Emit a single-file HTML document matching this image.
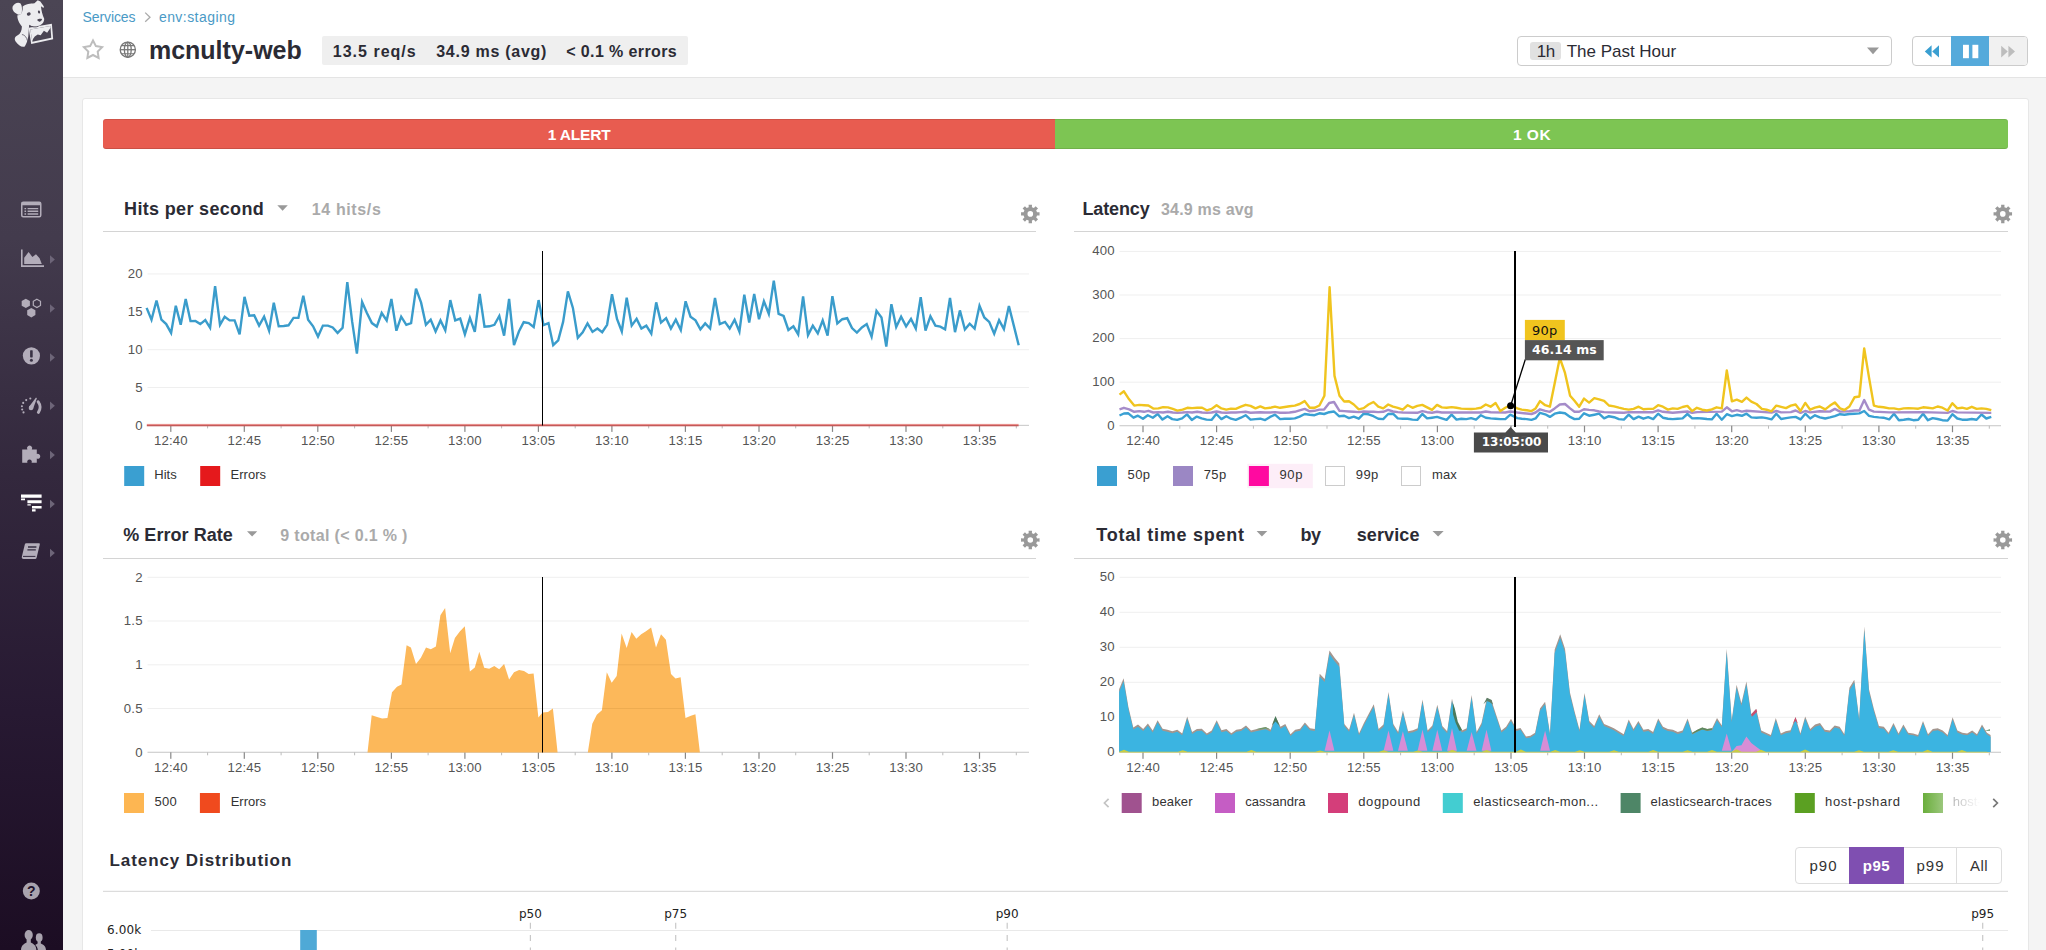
<!DOCTYPE html>
<html lang="en"><head><meta charset="utf-8"><title>mcnulty-web | Services</title>
<style>
html,body{margin:0;padding:0}
body{width:2046px;height:950px;overflow:hidden;position:relative;background:#f4f4f4;font-family:"Liberation Sans",sans-serif}
.t{position:absolute;white-space:nowrap;display:block}
.b{position:absolute;box-sizing:border-box}
#side{left:0;top:0;width:63px;height:950px;background:linear-gradient(180deg,#4b4554 0%,#433b4d 25%,#33283d 50%,#271932 75%,#1c0d23 100%)}
#head{left:63px;top:0;width:1983px;height:78px;background:#fff;border-bottom:1px solid #e4e4e4}
#panel{left:82px;top:98px;width:1947px;height:870px;background:#fff;border:1px solid #e7e7e7;border-radius:3px}
#stats{left:322px;top:36px;width:366px;height:28.5px;background:#efefef;border-radius:2px}
#sel{left:1517px;top:36px;width:375px;height:30px;background:#fff;border:1px solid #ccc;border-radius:4px}
#chip{left:1530px;top:42px;width:31px;height:17.5px;background:#e1e1e1;border-radius:3px}
#ctl{left:1912px;top:36px;width:116px;height:30px;background:#fff;border:1px solid #ccc;border-radius:4px}
#ctl2{left:1950.5px;top:36px;width:38.7px;height:30px;background:#55aadb}
#ctl3{left:1989.2px;top:37px;width:37.8px;height:28px;background:#f1f1f1;border-radius:0 3px 3px 0}
#red{left:103px;top:119px;width:952px;height:29.7px;background:#e85c50;border-radius:3px 0 0 3px;box-shadow:inset 0 1px 0 rgba(0,0,0,.10),inset 0 -1px 0 rgba(0,0,0,.13)}
#green{left:1055px;top:119px;width:953px;height:29.7px;background:#7dc553;border-radius:0 3px 3px 0;box-shadow:inset 0 1px 0 rgba(0,0,0,.08),inset 0 -1px 0 rgba(0,0,0,.10)}
#pb{left:1795px;top:847px;width:207px;height:37px;background:#fff;border:1px solid #ddd;border-radius:4px}
#pb2{left:1849px;top:847px;width:55px;height:37px;background:#7f4fb1}
.dv{position:absolute;top:848px;width:1px;height:35px;background:#ddd}
#charts{position:absolute;left:0;top:0}
</style></head><body>
<div class="b" id="side"></div><div class="b" id="head"></div><div class="b" id="panel"></div>
<div class="b" id="stats"></div><div class="b" id="sel"></div><div class="b" id="chip"></div>
<div class="b" id="ctl"></div><div class="b" id="ctl2"></div><div class="b" id="ctl3"></div>
<div class="b" id="red"></div><div class="b" id="green"></div>
<div class="b" id="pb"></div><div class="b" id="pb2"></div><div class="dv" style="left:1956px"></div>
<svg id="charts" width="2046" height="950" viewBox="0 0 2046 950">
<polygon points="277.3,205.3 287.8,205.3 282.6,210.8" fill="#999"/>
<polygon points="247.0,531.3 257.2,531.3 252.1,536.6" fill="#999"/>
<polygon points="1256.6,531.0 1267.3,531.0 1261.9,536.4" fill="#999"/>
<polygon points="1432.5,531.0 1443.7,531.0 1438.1,536.4" fill="#999"/>
<polygon points="1867.0,47.6 1879.0,47.6 1873.0,54.2" fill="#999"/>
<path d="M1028.61 204.65 L1031.99 204.65 L1031.91 207.19 L1033.91 208.02 L1035.64 206.17 L1038.03 208.56 L1036.18 210.29 L1037.01 212.29 L1039.55 212.21 L1039.55 215.59 L1037.01 215.51 L1036.18 217.51 L1038.03 219.24 L1035.64 221.63 L1033.91 219.78 L1031.91 220.61 L1031.99 223.15 L1028.61 223.15 L1028.69 220.61 L1026.69 219.78 L1024.96 221.63 L1022.57 219.24 L1024.42 217.51 L1023.59 215.51 L1021.05 215.59 L1021.05 212.21 L1023.59 212.29 L1024.42 210.29 L1022.57 208.56 L1024.96 206.17 L1026.69 208.02 L1028.69 207.19Z M1027.50 213.90 a2.8 2.8 0 1 0 5.6 0 a2.8 2.8 0 1 0 -5.6 0Z" fill="#999" fill-rule="evenodd"/>
<path d="M2001.11 204.65 L2004.49 204.65 L2004.41 207.19 L2006.41 208.02 L2008.14 206.17 L2010.53 208.56 L2008.68 210.29 L2009.51 212.29 L2012.05 212.21 L2012.05 215.59 L2009.51 215.51 L2008.68 217.51 L2010.53 219.24 L2008.14 221.63 L2006.41 219.78 L2004.41 220.61 L2004.49 223.15 L2001.11 223.15 L2001.19 220.61 L1999.19 219.78 L1997.46 221.63 L1995.07 219.24 L1996.92 217.51 L1996.09 215.51 L1993.55 215.59 L1993.55 212.21 L1996.09 212.29 L1996.92 210.29 L1995.07 208.56 L1997.46 206.17 L1999.19 208.02 L2001.19 207.19Z M2000.00 213.90 a2.8 2.8 0 1 0 5.6 0 a2.8 2.8 0 1 0 -5.6 0Z" fill="#999" fill-rule="evenodd"/>
<path d="M1028.61 530.75 L1031.99 530.75 L1031.91 533.29 L1033.91 534.12 L1035.64 532.27 L1038.03 534.66 L1036.18 536.39 L1037.01 538.39 L1039.55 538.31 L1039.55 541.69 L1037.01 541.61 L1036.18 543.61 L1038.03 545.34 L1035.64 547.73 L1033.91 545.88 L1031.91 546.71 L1031.99 549.25 L1028.61 549.25 L1028.69 546.71 L1026.69 545.88 L1024.96 547.73 L1022.57 545.34 L1024.42 543.61 L1023.59 541.61 L1021.05 541.69 L1021.05 538.31 L1023.59 538.39 L1024.42 536.39 L1022.57 534.66 L1024.96 532.27 L1026.69 534.12 L1028.69 533.29Z M1027.50 540.00 a2.8 2.8 0 1 0 5.6 0 a2.8 2.8 0 1 0 -5.6 0Z" fill="#999" fill-rule="evenodd"/>
<path d="M2001.11 530.75 L2004.49 530.75 L2004.41 533.29 L2006.41 534.12 L2008.14 532.27 L2010.53 534.66 L2008.68 536.39 L2009.51 538.39 L2012.05 538.31 L2012.05 541.69 L2009.51 541.61 L2008.68 543.61 L2010.53 545.34 L2008.14 547.73 L2006.41 545.88 L2004.41 546.71 L2004.49 549.25 L2001.11 549.25 L2001.19 546.71 L1999.19 545.88 L1997.46 547.73 L1995.07 545.34 L1996.92 543.61 L1996.09 541.61 L1993.55 541.69 L1993.55 538.31 L1996.09 538.39 L1996.92 536.39 L1995.07 534.66 L1997.46 532.27 L1999.19 534.12 L2001.19 533.29Z M2000.00 540.00 a2.8 2.8 0 1 0 5.6 0 a2.8 2.8 0 1 0 -5.6 0Z" fill="#999" fill-rule="evenodd"/>
<rect x="103.0" y="231.00" width="933.0" height="1" fill="#d4d4d4"/>
<rect x="1074.0" y="231.00" width="934.0" height="1" fill="#d4d4d4"/>
<rect x="103.0" y="558.00" width="933.0" height="1" fill="#d4d4d4"/>
<rect x="1074.0" y="558.00" width="934.0" height="1" fill="#d4d4d4"/>
<rect x="103.0" y="890.80" width="1905.0" height="1" fill="#d4d4d4"/>
<rect x="147.5" y="273.45" width="881.5" height="1" fill="#efefef"/>
<rect x="147.5" y="311.30" width="881.5" height="1" fill="#efefef"/>
<rect x="147.5" y="349.20" width="881.5" height="1" fill="#efefef"/>
<rect x="147.5" y="387.05" width="881.5" height="1" fill="#efefef"/>
<rect x="147.5" y="424.80" width="881.5" height="1.2" fill="#cfcfcf"/>
<rect x="170.2" y="425.4" width="1.2" height="6.5" fill="#888"/>
<rect x="243.7" y="425.4" width="1.2" height="6.5" fill="#888"/>
<rect x="317.2" y="425.4" width="1.2" height="6.5" fill="#888"/>
<rect x="390.8" y="425.4" width="1.2" height="6.5" fill="#888"/>
<rect x="464.3" y="425.4" width="1.2" height="6.5" fill="#888"/>
<rect x="537.8" y="425.4" width="1.2" height="6.5" fill="#888"/>
<rect x="611.3" y="425.4" width="1.2" height="6.5" fill="#888"/>
<rect x="684.8" y="425.4" width="1.2" height="6.5" fill="#888"/>
<rect x="758.4" y="425.4" width="1.2" height="6.5" fill="#888"/>
<rect x="831.9" y="425.4" width="1.2" height="6.5" fill="#888"/>
<rect x="905.4" y="425.4" width="1.2" height="6.5" fill="#888"/>
<rect x="978.9" y="425.4" width="1.2" height="6.5" fill="#888"/>
<rect x="207.1" y="425.4" width="1" height="3" fill="#bbb"/>
<rect x="280.6" y="425.4" width="1" height="3" fill="#bbb"/>
<rect x="354.1" y="425.4" width="1" height="3" fill="#bbb"/>
<rect x="427.6" y="425.4" width="1" height="3" fill="#bbb"/>
<rect x="501.1" y="425.4" width="1" height="3" fill="#bbb"/>
<rect x="574.7" y="425.4" width="1" height="3" fill="#bbb"/>
<rect x="648.2" y="425.4" width="1" height="3" fill="#bbb"/>
<rect x="721.7" y="425.4" width="1" height="3" fill="#bbb"/>
<rect x="795.2" y="425.4" width="1" height="3" fill="#bbb"/>
<rect x="868.7" y="425.4" width="1" height="3" fill="#bbb"/>
<rect x="942.3" y="425.4" width="1" height="3" fill="#bbb"/>
<rect x="1015.8" y="425.4" width="1" height="3" fill="#bbb"/>
<polyline points="146.6,307.9 151.5,319.7 156.5,300.5 161.4,319.7 166.2,324.1 171.1,332.9 175.8,305.7 180.7,324.8 185.7,299.0 190.5,321.1 195.4,320.9 200.3,324.1 205.3,320.1 210.1,327.8 215.1,286.2 220.0,324.8 224.7,316.7 229.6,320.4 234.6,320.4 239.6,334.4 244.5,296.8 249.3,315.7 254.2,315.3 259.1,325.6 264.1,316.7 269.1,330.7 273.8,302.7 278.7,326.3 283.7,326.0 288.5,325.3 293.5,317.9 298.4,317.9 303.3,295.8 308.1,319.7 313.1,326.3 318.0,336.6 322.9,325.6 327.9,325.6 332.7,327.5 337.6,332.9 342.6,327.8 347.3,282.1 352.2,321.9 356.9,353.6 362.1,302.0 366.9,313.0 371.9,323.1 376.8,326.6 381.7,313.0 386.7,320.4 391.4,299.0 396.4,330.7 401.2,316.7 406.3,324.8 411.1,323.1 416.0,288.7 421.1,302.7 425.9,324.8 430.7,319.7 435.6,331.5 440.5,320.4 445.3,330.4 450.3,300.1 455.2,320.4 460.2,318.6 464.9,334.4 469.9,317.9 474.8,331.9 479.7,293.9 484.5,326.7 489.5,326.3 494.4,324.8 499.3,316.0 504.1,335.6 509.1,299.0 514.0,345.2 518.9,331.5 523.7,322.2 528.7,323.1 533.7,327.0 538.6,300.1 543.5,325.1 548.5,323.1 553.2,345.2 558.2,340.3 563.1,321.9 567.9,291.4 572.9,307.9 577.8,337.8 582.7,332.2 587.5,323.4 592.5,331.9 597.4,328.5 602.2,332.2 607.1,324.8 612.0,294.3 617.0,318.9 621.8,331.5 626.7,297.6 631.7,325.6 636.6,318.9 641.4,328.5 646.3,325.6 651.3,333.7 656.2,302.4 661.0,322.6 666.1,318.2 670.9,328.5 675.8,319.7 680.8,330.0 685.6,301.3 690.5,316.7 695.5,320.4 700.4,329.3 705.2,323.4 710.1,328.5 715.0,298.0 719.8,324.1 725.0,321.9 729.7,328.5 734.6,319.7 739.4,331.5 744.3,294.6 749.2,322.6 754.2,293.9 759.0,319.2 763.9,301.3 768.8,313.8 773.8,280.6 778.6,313.8 783.6,316.0 788.4,330.0 793.4,326.3 798.2,334.4 803.1,296.4 808.0,335.1 812.8,325.6 817.8,333.4 822.7,320.4 827.6,335.6 832.4,296.1 837.3,323.4 842.3,319.2 847.2,318.2 852.0,328.1 856.9,332.6 861.9,327.5 866.7,324.1 871.6,336.6 876.5,310.8 881.5,317.5 886.3,346.5 891.4,304.2 896.2,327.0 901.1,316.7 906.1,326.3 911.0,318.9 915.8,328.5 920.7,297.1 925.5,330.7 930.4,316.3 935.4,325.6 940.3,326.6 945.1,329.3 950.0,297.9 955.0,332.2 959.9,310.4 964.9,329.5 969.7,323.7 974.6,328.5 979.5,305.7 984.3,317.5 989.2,321.9 994.2,333.7 999.1,320.1 1003.9,329.0 1008.9,306.0 1013.8,325.6 1018.7,345.2" fill="none" stroke="#3a9ccb" stroke-width="2.4" stroke-linejoin="miter"/>
<rect x="146.8" y="423.9" width="871.8" height="1.1" fill="#e98f8c"/><rect x="146.8" y="425" width="871.8" height="1.3" fill="#c45a59"/>
<rect x="542" y="251" width="1" height="174.5" fill="#000"/>
<rect x="1119.5" y="250.90" width="881.5" height="1" fill="#efefef"/>
<rect x="1119.5" y="294.50" width="881.5" height="1" fill="#efefef"/>
<rect x="1119.5" y="338.10" width="881.5" height="1" fill="#efefef"/>
<rect x="1119.5" y="381.70" width="881.5" height="1" fill="#efefef"/>
<rect x="1119.5" y="425.10" width="881.5" height="1.2" fill="#cfcfcf"/>
<rect x="1142.4" y="425.7" width="1.2" height="6.5" fill="#888"/>
<rect x="1216.0" y="425.7" width="1.2" height="6.5" fill="#888"/>
<rect x="1289.6" y="425.7" width="1.2" height="6.5" fill="#888"/>
<rect x="1363.2" y="425.7" width="1.2" height="6.5" fill="#888"/>
<rect x="1436.8" y="425.7" width="1.2" height="6.5" fill="#888"/>
<rect x="1510.4" y="425.7" width="1.2" height="6.5" fill="#888"/>
<rect x="1583.9" y="425.7" width="1.2" height="6.5" fill="#888"/>
<rect x="1657.5" y="425.7" width="1.2" height="6.5" fill="#888"/>
<rect x="1731.1" y="425.7" width="1.2" height="6.5" fill="#888"/>
<rect x="1804.7" y="425.7" width="1.2" height="6.5" fill="#888"/>
<rect x="1878.3" y="425.7" width="1.2" height="6.5" fill="#888"/>
<rect x="1951.9" y="425.7" width="1.2" height="6.5" fill="#888"/>
<rect x="1179.3" y="425.7" width="1" height="3" fill="#bbb"/>
<rect x="1252.9" y="425.7" width="1" height="3" fill="#bbb"/>
<rect x="1326.5" y="425.7" width="1" height="3" fill="#bbb"/>
<rect x="1400.1" y="425.7" width="1" height="3" fill="#bbb"/>
<rect x="1473.7" y="425.7" width="1" height="3" fill="#bbb"/>
<rect x="1547.2" y="425.7" width="1" height="3" fill="#bbb"/>
<rect x="1620.8" y="425.7" width="1" height="3" fill="#bbb"/>
<rect x="1694.4" y="425.7" width="1" height="3" fill="#bbb"/>
<rect x="1768.0" y="425.7" width="1" height="3" fill="#bbb"/>
<rect x="1841.6" y="425.7" width="1" height="3" fill="#bbb"/>
<rect x="1915.2" y="425.7" width="1" height="3" fill="#bbb"/>
<rect x="1988.8" y="425.7" width="1" height="3" fill="#bbb"/>
<polyline points="1119.5,415.5 1123.9,413.5 1128.3,413.3 1133.5,417.7 1137.9,415.7 1143.0,418.8 1147.8,415.2 1152.8,417.7 1157.7,414.0 1162.5,419.6 1167.5,416.2 1172.3,419.1 1177.2,419.9 1182.1,418.4 1187.0,414.4 1191.8,419.9 1196.8,416.6 1201.6,418.4 1206.5,419.6 1211.5,419.9 1216.3,414.0 1221.4,419.1 1226.3,416.2 1231.0,418.7 1235.8,419.9 1240.9,417.7 1245.6,415.2 1250.5,419.6 1255.5,419.1 1260.3,418.7 1265.1,420.1 1270.1,416.9 1275.0,414.7 1280.1,419.1 1284.8,418.7 1289.6,418.7 1294.8,418.4 1299.6,416.6 1304.7,414.0 1309.7,414.7 1314.5,415.2 1319.4,413.3 1324.1,414.0 1329.2,412.2 1334.0,411.5 1339.0,416.2 1344.2,415.7 1349.0,418.1 1353.8,416.6 1358.8,418.7 1363.7,413.7 1368.5,414.3 1373.5,416.2 1378.3,418.7 1383.2,419.1 1388.2,414.0 1393.0,413.7 1397.8,418.4 1402.8,418.7 1407.6,418.7 1412.5,419.6 1417.3,419.9 1422.3,414.0 1427.1,418.4 1432.0,417.7 1437.0,416.9 1441.8,418.4 1446.6,419.9 1451.6,414.7 1456.5,419.6 1461.3,418.7 1466.3,419.1 1471.1,418.1 1476.0,419.6 1480.9,415.2 1485.8,417.7 1490.6,418.4 1495.6,418.7 1500.4,419.1 1505.3,419.1 1510.3,414.7 1517.3,418.1 1521.7,418.7 1526.8,419.1 1531.5,419.9 1535.6,418.4 1540.0,412.8 1545.2,414.3 1549.9,416.9 1554.7,413.7 1559.8,412.5 1565.0,413.3 1570.1,416.9 1574.5,419.1 1579.2,418.7 1584.0,413.3 1589.1,415.7 1594.3,414.7 1599.1,413.7 1604.1,418.4 1608.9,416.2 1614.1,417.2 1618.9,419.1 1623.9,419.6 1628.7,414.7 1633.6,419.1 1638.6,416.6 1643.4,418.7 1648.2,417.2 1653.2,419.1 1658.1,413.7 1662.9,417.7 1667.9,418.7 1672.7,419.1 1677.6,418.7 1682.6,418.4 1687.4,414.0 1692.2,418.4 1697.3,418.1 1702.1,418.5 1706.9,419.0 1711.8,419.4 1716.6,413.7 1721.8,419.7 1726.8,414.2 1731.9,416.1 1736.8,414.8 1741.9,415.8 1746.5,413.7 1751.3,417.4 1756.5,417.7 1761.8,417.4 1766.6,418.1 1771.5,419.4 1776.3,413.7 1781.1,419.0 1786.0,418.1 1790.8,417.4 1795.6,416.9 1800.5,419.4 1805.3,413.7 1810.2,418.5 1815.0,415.3 1819.8,417.4 1825.2,418.5 1830.0,417.4 1834.8,416.1 1840.0,414.2 1844.5,414.8 1849.4,414.0 1854.5,413.7 1859.4,413.4 1864.2,411.0 1869.0,415.8 1873.9,416.9 1878.7,417.4 1883.5,417.7 1889.2,419.4 1894.0,413.7 1898.9,420.2 1903.7,419.7 1908.5,419.0 1913.4,420.2 1918.2,419.7 1923.1,413.7 1927.9,420.2 1932.7,418.1 1937.6,419.0 1942.4,420.2 1947.6,420.6 1952.4,414.2 1957.3,418.5 1962.1,419.7 1966.9,419.7 1971.8,419.0 1976.6,419.7 1981.5,414.5 1986.3,418.5 1991.3,416.9" fill="none" stroke="#3aa0d3" stroke-width="2.4" stroke-linejoin="round"/>
<polyline points="1119.5,409.3 1123.9,407.8 1129.1,409.3 1134.2,411.8 1139.3,411.1 1144.0,411.8 1148.4,410.8 1153.3,412.5 1158.4,412.1 1163.1,412.5 1167.9,411.8 1172.8,412.5 1177.4,412.8 1182.6,412.5 1187.4,412.1 1192.1,412.5 1197.2,411.8 1202.1,412.5 1206.8,412.8 1211.6,412.5 1216.6,411.5 1221.4,412.5 1226.3,412.8 1231.0,412.5 1235.8,412.5 1240.9,412.1 1245.6,411.8 1250.5,412.8 1255.5,412.5 1260.3,412.2 1265.1,412.5 1270.1,412.5 1275.0,412.1 1280.1,412.8 1284.8,412.8 1289.6,412.5 1294.8,411.8 1299.6,410.3 1304.7,408.9 1309.7,411.3 1314.5,410.8 1319.4,409.6 1324.1,409.6 1329.2,403.0 1334.0,402.0 1339.5,410.8 1344.2,411.1 1349.0,411.5 1353.8,411.8 1358.8,412.1 1363.7,411.5 1368.5,411.8 1373.5,411.8 1378.3,412.1 1383.2,411.8 1388.2,409.9 1393.0,411.5 1397.8,412.1 1402.8,412.5 1417.3,412.8 1422.3,411.1 1427.1,412.2 1432.0,412.8 1437.0,411.8 1441.8,412.5 1458.7,412.5 1480.9,412.5 1485.8,411.5 1490.6,412.2 1505.3,412.5 1510.3,411.5 1517.3,412.5 1531.5,414.0 1535.6,412.5 1540.0,409.3 1545.2,410.8 1549.9,411.8 1554.7,408.4 1559.8,404.5 1565.0,404.0 1570.1,408.4 1574.5,411.8 1579.2,411.8 1584.0,409.3 1589.1,409.9 1594.3,410.3 1599.1,411.5 1604.1,412.1 1614.1,412.5 1623.9,412.8 1628.7,412.1 1653.2,412.2 1658.1,410.3 1662.9,411.8 1672.7,412.8 1687.4,411.5 1692.2,412.8 1697.3,412.1 1721.8,411.6 1726.8,407.3 1731.9,411.3 1736.8,410.2 1741.9,411.6 1746.5,410.8 1771.5,412.6 1776.3,411.0 1781.1,412.4 1790.8,412.1 1795.6,410.5 1800.5,412.9 1805.3,411.0 1810.2,412.4 1819.8,411.3 1830.0,411.6 1834.8,408.9 1840.0,411.6 1849.4,411.3 1854.5,410.5 1859.4,410.5 1864.2,400.0 1869.0,409.7 1873.9,411.6 1889.2,412.4 1923.1,412.1 1947.6,412.9 1952.4,411.0 1957.3,412.4 1991.3,412.9" fill="none" stroke="#a58cc9" stroke-width="2.4" stroke-linejoin="round"/>
<polyline points="1119.5,394.6 1123.9,391.3 1129.1,399.3 1134.2,405.6 1139.3,404.9 1144.0,405.2 1148.4,405.5 1153.3,408.6 1158.4,408.4 1163.1,407.1 1167.9,407.4 1172.8,408.9 1177.4,410.6 1182.6,409.6 1187.4,407.8 1192.1,408.1 1197.2,407.8 1202.1,407.8 1206.8,410.3 1211.6,408.9 1216.6,405.2 1221.4,408.4 1226.3,409.6 1231.0,408.6 1235.8,408.9 1240.9,406.7 1245.6,404.8 1250.5,405.9 1255.5,408.4 1260.3,406.4 1265.1,408.4 1270.1,407.8 1275.0,406.7 1280.1,407.8 1284.8,407.0 1289.6,406.2 1294.8,405.6 1299.6,404.0 1304.7,401.1 1309.7,407.8 1314.5,407.8 1319.4,405.5 1324.4,395.7 1329.6,287.2 1334.5,375.9 1339.5,395.7 1344.2,401.5 1349.0,401.2 1353.8,404.5 1358.8,409.3 1363.7,408.1 1368.5,404.5 1373.5,402.0 1378.3,406.7 1383.2,408.4 1388.2,404.5 1393.0,406.7 1397.8,407.8 1402.8,409.6 1407.7,405.2 1412.5,407.8 1417.3,405.9 1422.3,404.9 1427.1,407.4 1432.0,409.9 1437.0,404.9 1441.8,407.4 1446.6,407.7 1451.6,407.1 1456.5,407.8 1461.3,408.6 1466.3,408.9 1471.1,409.0 1476.0,408.6 1480.9,407.8 1485.8,404.5 1490.6,406.7 1495.6,403.0 1500.4,411.1 1505.3,407.8 1510.3,405.2 1517.3,408.4 1521.7,409.6 1526.8,410.3 1531.5,411.1 1535.6,408.4 1540.0,401.1 1545.2,405.2 1549.9,406.7 1554.7,383.2 1559.8,358.0 1565.0,372.9 1570.1,395.7 1574.5,400.8 1579.2,406.7 1584.0,398.6 1589.1,402.6 1594.3,398.2 1599.1,399.3 1604.1,400.8 1608.9,405.5 1614.1,406.4 1618.9,407.7 1623.9,408.9 1628.7,409.6 1633.6,408.9 1638.6,406.7 1643.4,409.3 1648.2,408.9 1653.2,408.9 1658.1,405.2 1662.9,406.7 1667.9,409.6 1672.7,408.4 1677.6,408.9 1682.6,407.0 1687.4,405.9 1692.2,411.1 1696.9,407.8 1702.1,409.7 1706.9,410.5 1711.8,409.4 1716.6,407.3 1721.8,408.4 1726.8,370.5 1731.9,401.3 1736.8,399.7 1741.9,401.9 1746.5,397.6 1751.3,401.6 1756.5,404.0 1761.8,408.9 1766.6,409.7 1771.5,411.3 1776.3,405.6 1781.1,406.8 1786.0,408.1 1790.8,405.6 1795.6,404.5 1800.5,411.0 1805.3,402.9 1810.2,409.7 1815.0,407.7 1819.8,406.5 1825.2,409.4 1830.0,405.6 1834.8,402.4 1840.0,408.4 1844.5,410.0 1849.4,406.5 1854.5,397.3 1859.4,396.5 1864.2,348.4 1869.0,377.4 1873.9,405.6 1878.7,406.8 1883.5,407.3 1889.2,408.4 1894.0,408.4 1898.9,409.4 1903.7,408.4 1908.5,408.1 1913.4,408.4 1918.2,408.7 1923.1,407.3 1927.9,407.7 1932.7,408.4 1937.6,406.5 1942.4,407.7 1947.6,410.5 1952.4,403.2 1957.3,408.4 1962.1,407.7 1966.9,408.9 1971.8,406.8 1976.6,408.9 1981.5,408.4 1986.3,408.9 1991.3,410.2" fill="none" stroke="#f0c41e" stroke-width="2.4" stroke-linejoin="round"/>
<rect x="1514" y="251" width="2" height="176" fill="#000"/>
<line x1="1510.6" y1="405.7" x2="1525.3" y2="359.5" stroke="#000" stroke-width="1.3"/>
<circle cx="1510.6" cy="405.7" r="3.5" fill="#000"/>
<rect x="1524.9" y="319.9" width="39.9" height="20.3" fill="#f0c41e"/>
<rect x="1524.9" y="340.1" width="78.8" height="20.2" fill="#555"/>
<path d="M1473.9 432.5H1505.4L1510.6 427L1515.8 432.5H1548V452.4H1473.9Z" fill="#4a4a4a"/>
<rect x="147.5" y="576.80" width="881.5" height="1" fill="#efefef"/>
<rect x="147.5" y="620.50" width="881.5" height="1" fill="#efefef"/>
<rect x="147.5" y="664.30" width="881.5" height="1" fill="#efefef"/>
<rect x="147.5" y="708.00" width="881.5" height="1" fill="#efefef"/>
<rect x="147.5" y="751.70" width="881.5" height="1.2" fill="#cfcfcf"/>
<rect x="170.2" y="752.3" width="1.2" height="6.5" fill="#888"/>
<rect x="243.7" y="752.3" width="1.2" height="6.5" fill="#888"/>
<rect x="317.2" y="752.3" width="1.2" height="6.5" fill="#888"/>
<rect x="390.8" y="752.3" width="1.2" height="6.5" fill="#888"/>
<rect x="464.3" y="752.3" width="1.2" height="6.5" fill="#888"/>
<rect x="537.8" y="752.3" width="1.2" height="6.5" fill="#888"/>
<rect x="611.3" y="752.3" width="1.2" height="6.5" fill="#888"/>
<rect x="684.8" y="752.3" width="1.2" height="6.5" fill="#888"/>
<rect x="758.4" y="752.3" width="1.2" height="6.5" fill="#888"/>
<rect x="831.9" y="752.3" width="1.2" height="6.5" fill="#888"/>
<rect x="905.4" y="752.3" width="1.2" height="6.5" fill="#888"/>
<rect x="978.9" y="752.3" width="1.2" height="6.5" fill="#888"/>
<rect x="207.1" y="752.3" width="1" height="3" fill="#bbb"/>
<rect x="280.6" y="752.3" width="1" height="3" fill="#bbb"/>
<rect x="354.1" y="752.3" width="1" height="3" fill="#bbb"/>
<rect x="427.6" y="752.3" width="1" height="3" fill="#bbb"/>
<rect x="501.1" y="752.3" width="1" height="3" fill="#bbb"/>
<rect x="574.7" y="752.3" width="1" height="3" fill="#bbb"/>
<rect x="648.2" y="752.3" width="1" height="3" fill="#bbb"/>
<rect x="721.7" y="752.3" width="1" height="3" fill="#bbb"/>
<rect x="795.2" y="752.3" width="1" height="3" fill="#bbb"/>
<rect x="868.7" y="752.3" width="1" height="3" fill="#bbb"/>
<rect x="942.3" y="752.3" width="1" height="3" fill="#bbb"/>
<rect x="1015.8" y="752.3" width="1" height="3" fill="#bbb"/>
<polygon points="367.5,752.4 371.7,715.3 377.1,717.1 382.2,718.4 387.4,718.0 392.0,692.2 397.0,686.7 401.5,684.4 406.6,645.2 410.9,647.5 416.0,664.1 420.9,657.8 426.0,647.5 430.8,649.3 435.9,646.4 440.4,615.3 445.1,608.1 450.2,653.3 454.9,637.9 459.8,631.6 464.8,626.2 469.9,671.4 474.8,667.4 479.3,651.8 484.2,667.8 489.2,668.7 494.3,666.0 499.2,669.2 504.1,664.1 509.1,679.5 514.0,672.3 519.1,669.9 524.0,671.0 528.7,674.1 533.6,673.5 538.4,717.5 542.6,712.6 548.0,712.1 552.9,708.5 557.6,752.4" fill="#fcb85a"/>
<polygon points="587.8,752.4 592.3,723.8 596.8,714.8 601.9,710.3 606.8,672.3 611.7,682.8 616.7,675.9 621.6,633.4 626.7,647.9 631.6,632.0 636.3,638.8 641.2,634.3 646.0,631.2 651.1,627.6 656.0,647.5 661.0,634.3 665.9,639.7 671.0,674.1 675.5,678.6 680.6,677.2 685.5,718.0 690.9,715.7 695.4,714.2 699.9,752.4" fill="#fcb85a"/>
<clipPath id="oc"><polygon points="367.5,752.4 371.7,715.3 377.1,717.1 382.2,718.4 387.4,718.0 392.0,692.2 397.0,686.7 401.5,684.4 406.6,645.2 410.9,647.5 416.0,664.1 420.9,657.8 426.0,647.5 430.8,649.3 435.9,646.4 440.4,615.3 445.1,608.1 450.2,653.3 454.9,637.9 459.8,631.6 464.8,626.2 469.9,671.4 474.8,667.4 479.3,651.8 484.2,667.8 489.2,668.7 494.3,666.0 499.2,669.2 504.1,664.1 509.1,679.5 514.0,672.3 519.1,669.9 524.0,671.0 528.7,674.1 533.6,673.5 538.4,717.5 542.6,712.6 548.0,712.1 552.9,708.5 557.6,752.4"/><polygon points="587.8,752.4 592.3,723.8 596.8,714.8 601.9,710.3 606.8,672.3 611.7,682.8 616.7,675.9 621.6,633.4 626.7,647.9 631.6,632.0 636.3,638.8 641.2,634.3 646.0,631.2 651.1,627.6 656.0,647.5 661.0,634.3 665.9,639.7 671.0,674.1 675.5,678.6 680.6,677.2 685.5,718.0 690.9,715.7 695.4,714.2 699.9,752.4"/></clipPath><g clip-path="url(#oc)">
<rect x="365.0" y="620.50" width="340.0" height="1" fill="rgba(120,70,0,0.10)"/>
<rect x="365.0" y="664.30" width="340.0" height="1" fill="rgba(120,70,0,0.10)"/>
<rect x="365.0" y="708.00" width="340.0" height="1" fill="rgba(120,70,0,0.10)"/>
</g>
<rect x="542" y="577" width="1" height="175.5" fill="#000"/>
<rect x="1119.5" y="576.80" width="881.5" height="1" fill="#efefef"/>
<rect x="1119.5" y="611.80" width="881.5" height="1" fill="#efefef"/>
<rect x="1119.5" y="646.80" width="881.5" height="1" fill="#efefef"/>
<rect x="1119.5" y="681.80" width="881.5" height="1" fill="#efefef"/>
<rect x="1119.5" y="716.80" width="881.5" height="1" fill="#efefef"/>
<rect x="1119.5" y="751.70" width="881.5" height="1.2" fill="#cfcfcf"/>
<rect x="1142.4" y="752.3" width="1.2" height="6.5" fill="#888"/>
<rect x="1216.0" y="752.3" width="1.2" height="6.5" fill="#888"/>
<rect x="1289.6" y="752.3" width="1.2" height="6.5" fill="#888"/>
<rect x="1363.2" y="752.3" width="1.2" height="6.5" fill="#888"/>
<rect x="1436.8" y="752.3" width="1.2" height="6.5" fill="#888"/>
<rect x="1510.4" y="752.3" width="1.2" height="6.5" fill="#888"/>
<rect x="1583.9" y="752.3" width="1.2" height="6.5" fill="#888"/>
<rect x="1657.5" y="752.3" width="1.2" height="6.5" fill="#888"/>
<rect x="1731.1" y="752.3" width="1.2" height="6.5" fill="#888"/>
<rect x="1804.7" y="752.3" width="1.2" height="6.5" fill="#888"/>
<rect x="1878.3" y="752.3" width="1.2" height="6.5" fill="#888"/>
<rect x="1951.9" y="752.3" width="1.2" height="6.5" fill="#888"/>
<rect x="1179.3" y="752.3" width="1" height="3" fill="#bbb"/>
<rect x="1252.9" y="752.3" width="1" height="3" fill="#bbb"/>
<rect x="1326.5" y="752.3" width="1" height="3" fill="#bbb"/>
<rect x="1400.1" y="752.3" width="1" height="3" fill="#bbb"/>
<rect x="1473.7" y="752.3" width="1" height="3" fill="#bbb"/>
<rect x="1547.2" y="752.3" width="1" height="3" fill="#bbb"/>
<rect x="1620.8" y="752.3" width="1" height="3" fill="#bbb"/>
<rect x="1694.4" y="752.3" width="1" height="3" fill="#bbb"/>
<rect x="1768.0" y="752.3" width="1" height="3" fill="#bbb"/>
<rect x="1841.6" y="752.3" width="1" height="3" fill="#bbb"/>
<rect x="1915.2" y="752.3" width="1" height="3" fill="#bbb"/>
<rect x="1988.8" y="752.3" width="1" height="3" fill="#bbb"/>
<polygon points="1119.1,752.0 1119.1,689.3 1123.6,678.2 1128.4,706.9 1133.3,727.6 1138.0,724.6 1143.2,729.0 1147.9,723.6 1152.7,730.5 1157.6,720.2 1162.6,728.7 1167.5,729.8 1172.3,731.2 1177.3,729.8 1182.2,733.5 1187.2,716.5 1192.1,732.0 1196.9,729.0 1201.8,728.7 1206.8,733.5 1211.7,730.5 1216.7,720.2 1221.5,730.2 1226.4,729.0 1231.3,733.2 1236.3,729.8 1241.1,729.0 1246.0,725.4 1251.0,730.5 1255.9,729.3 1260.7,728.3 1265.7,727.3 1270.6,729.8 1275.5,716.5 1280.5,726.8 1285.3,723.9 1290.5,734.2 1295.2,729.8 1300.1,728.7 1304.9,722.4 1310.0,728.3 1314.8,729.0 1319.7,673.8 1324.7,678.9 1329.5,650.5 1334.4,657.6 1339.3,663.5 1344.3,723.9 1349.1,729.8 1354.0,712.8 1359.0,733.5 1363.9,723.1 1368.9,713.6 1373.8,704.3 1378.6,729.0 1383.5,724.6 1388.5,691.9 1393.3,723.9 1398.2,732.0 1402.9,710.6 1408.1,731.2 1413.0,730.2 1417.7,728.3 1422.5,699.6 1427.6,730.5 1432.4,725.4 1437.3,704.7 1442.3,726.1 1447.2,731.2 1452.0,698.5 1457.0,723.1 1461.9,730.5 1466.7,728.3 1471.6,695.1 1476.6,732.0 1481.5,723.1 1486.9,698.1 1491.4,700.3 1496.5,715.8 1501.4,730.5 1506.1,726.8 1511.0,718.7 1516.4,729.0 1520.5,727.9 1526.0,736.4 1530.4,735.7 1535.1,732.7 1540.0,708.4 1545.1,701.8 1550.0,733.5 1554.7,649.5 1560.2,634.3 1565.0,648.7 1569.9,692.2 1574.6,711.4 1579.5,729.8 1584.5,692.9 1589.3,720.9 1594.2,726.1 1599.2,714.3 1604.1,723.9 1608.9,726.1 1613.9,728.3 1618.8,731.2 1623.7,734.2 1628.7,719.5 1633.5,729.0 1638.4,720.9 1643.4,729.8 1648.3,729.0 1653.1,732.0 1658.2,718.4 1663.0,726.8 1667.9,729.0 1672.9,729.8 1677.8,732.0 1682.6,730.5 1687.6,718.4 1692.2,732.7 1697.4,729.8 1702.2,727.6 1707.2,729.0 1712.1,728.3 1717.0,718.0 1721.8,725.4 1726.7,648.7 1731.7,720.2 1736.6,684.8 1741.4,703.3 1746.4,681.6 1751.3,714.3 1756.2,709.1 1761.2,730.5 1766.0,732.7 1770.9,734.9 1775.8,718.0 1780.8,733.5 1785.6,731.2 1790.5,730.2 1795.5,717.2 1800.4,733.5 1805.2,716.5 1810.2,729.0 1815.1,724.6 1820.0,723.1 1824.8,729.8 1829.8,730.5 1834.7,725.4 1839.6,726.8 1844.4,734.2 1849.4,687.8 1854.3,679.7 1859.2,718.7 1864.3,626.6 1869.0,689.3 1873.9,709.1 1878.9,726.1 1883.8,726.8 1888.6,732.7 1893.5,723.1 1898.5,733.5 1903.4,724.6 1908.2,732.7 1913.2,733.5 1918.1,734.9 1923.0,720.9 1928.0,734.2 1932.8,729.0 1937.7,728.3 1942.7,730.5 1947.6,734.9 1952.6,717.2 1957.4,730.5 1962.3,732.7 1967.2,733.5 1972.2,730.5 1977.0,734.2 1982.0,724.6 1986.9,732.7 1990.6,734.9 1990.6,752.0" fill="#a3968f"/>
<polygon points="1119.1,752.0 1119.1,692.0 1123.6,681.2 1128.4,709.3 1133.3,729.6 1138.0,726.7 1143.2,731.0 1147.9,725.7 1152.7,732.4 1157.6,722.3 1162.6,730.7 1167.5,731.7 1172.3,733.2 1177.3,731.7 1182.2,735.3 1187.2,718.7 1192.1,733.9 1196.9,731.0 1201.8,730.7 1206.8,735.3 1211.7,732.4 1216.7,722.3 1221.5,732.2 1226.4,731.0 1231.3,735.0 1236.3,731.7 1241.1,731.0 1246.0,727.4 1251.0,732.4 1255.9,731.3 1260.7,730.3 1265.7,729.3 1270.6,731.7 1275.5,718.7 1280.5,728.8 1285.3,725.9 1290.5,736.1 1295.2,731.7 1300.1,730.7 1304.9,724.5 1310.0,730.3 1314.8,731.0 1319.7,676.8 1324.7,681.9 1329.5,654.0 1334.4,661.0 1339.3,666.7 1344.3,725.9 1349.1,731.7 1354.0,715.1 1359.0,735.3 1363.9,725.2 1368.9,715.8 1373.8,706.7 1378.6,731.0 1383.5,726.7 1388.5,694.6 1393.3,725.9 1398.2,733.9 1402.9,712.9 1408.1,733.2 1413.0,732.2 1417.7,730.3 1422.5,702.1 1427.6,732.4 1432.4,727.4 1437.3,707.2 1442.3,728.1 1447.2,733.2 1452.0,701.1 1457.0,725.2 1461.9,732.4 1466.7,730.3 1471.6,697.8 1476.6,733.9 1481.5,725.2 1486.9,700.7 1491.4,702.8 1496.5,718.0 1501.4,732.4 1506.1,728.8 1511.0,720.9 1516.4,731.0 1520.5,729.8 1526.0,738.2 1530.4,737.5 1535.1,734.6 1540.0,710.8 1545.1,704.3 1550.0,735.3 1554.7,653.0 1560.2,638.1 1565.0,652.3 1569.9,694.9 1574.6,713.7 1579.5,731.7 1584.5,695.6 1589.3,723.1 1594.2,728.1 1599.2,716.6 1604.1,725.9 1608.9,728.1 1613.9,730.3 1618.8,733.2 1623.7,736.1 1628.7,721.6 1633.5,731.0 1638.4,723.1 1643.4,731.7 1648.3,731.0 1653.1,733.9 1658.2,720.6 1663.0,728.8 1667.9,731.0 1672.9,731.7 1677.8,733.9 1682.6,732.4 1687.6,720.6 1692.2,734.6 1697.4,731.7 1702.2,729.6 1707.2,731.0 1712.1,730.3 1717.0,720.2 1721.8,727.4 1726.7,652.3 1731.7,722.3 1736.6,687.7 1741.4,705.7 1746.4,684.5 1751.3,716.6 1756.2,711.5 1761.2,732.4 1766.0,734.6 1770.9,736.8 1775.8,720.2 1780.8,735.3 1785.6,733.2 1790.5,732.2 1795.5,719.4 1800.4,735.3 1805.2,718.7 1810.2,731.0 1815.1,726.7 1820.0,725.2 1824.8,731.7 1829.8,732.4 1834.7,727.4 1839.6,728.8 1844.4,736.1 1849.4,690.6 1854.3,682.6 1859.2,720.9 1864.3,630.6 1869.0,692.0 1873.9,711.5 1878.9,728.1 1883.8,728.8 1888.6,734.6 1893.5,725.2 1898.5,735.3 1903.4,726.7 1908.2,734.6 1913.2,735.3 1918.1,736.8 1923.0,723.1 1928.0,736.1 1932.8,731.0 1937.7,730.3 1942.7,732.4 1947.6,736.8 1952.6,719.4 1957.4,732.4 1962.3,734.6 1967.2,735.3 1972.2,732.4 1977.0,736.1 1982.0,726.7 1986.9,734.6 1990.6,736.8 1990.6,752.0" fill="#3bb4e1"/>
<polygon points="1271.8,725.5 1275.5,716.1 1279.7,725.8 1275.5,721.4" fill="#4a7a5c"/>
<polygon points="1255.9,729.3 1260.7,728.0 1265.7,727.0 1270.6,729.5 1265.7,728.6 1260.7,729.5" fill="#6f9a6a"/>
<polygon points="1452.8,702.5 1454.8,708.4 1457.8,721.7 1462.2,730.2 1459.2,730.8 1455.7,723.1 1453.0,714.3" fill="#4a7a5c"/>
<polygon points="1483.4,704.3 1486.9,697.8 1491.7,700.0 1493.1,704.7 1489.6,701.9 1486.9,701.0" fill="#5f7f68"/>
<polygon points="1692.2,732.7 1697.4,729.8 1702.2,727.6 1707.2,729.0 1712.1,728.3 1712.1,729.8 1707.2,730.7 1702.2,729.5 1697.4,731.5 1692.2,733.9" fill="#5d8a5e"/>
<polygon points="1751.3,714.3 1756.2,708.9 1757.2,711.7 1752.0,716.7" fill="#c8506f"/>
<polygon points="1793.0,723.4 1795.5,717.0 1797.9,723.4 1795.5,721.1" fill="#c8506f"/>
<polygon points="1984.7,730.8 1990.0,729.3 1990.0,730.8" fill="#5d8a5e"/>
<polygon points="1324.6,750.8 1329.5,730.5 1334.4,750.8" fill="#d78dd6"/>
<polygon points="1383.6,750.8 1388.5,730.5 1393.4,750.8" fill="#d78dd6"/>
<polygon points="1398.0,750.8 1402.9,731.2 1407.8,750.8" fill="#d78dd6"/>
<polygon points="1417.6,750.8 1422.5,729.8 1427.4,750.8" fill="#d78dd6"/>
<polygon points="1432.4,750.8 1437.3,729.8 1442.2,750.8" fill="#d78dd6"/>
<polygon points="1447.1,750.8 1452.0,728.3 1456.9,750.8" fill="#d78dd6"/>
<polygon points="1466.7,750.8 1471.6,732.0 1476.5,750.8" fill="#d78dd6"/>
<polygon points="1481.6,750.8 1486.5,729.8 1491.4,750.8" fill="#d78dd6"/>
<polygon points="1540.2,750.8 1545.1,730.5 1550.0,750.8" fill="#d78dd6"/>
<polygon points="1721.8,750.8 1726.7,733.5 1731.6,750.8" fill="#d78dd6"/>
<polygon points="1731.7,751.9 1736.6,746.0 1741.4,745.2 1746.4,736.4 1751.3,743.0 1756.2,746.7 1761.2,750.4 1763.7,751.9" fill="#d78dd6"/>
<polygon points="1119.1,752.4 1119.1,751.7 1124.0,749.8 1128.9,751.7 1133.8,751.7 1138.7,751.7 1143.6,751.7 1148.5,751.7 1153.4,751.7 1158.3,751.7 1163.2,751.7 1168.1,751.7 1173.0,751.7 1177.9,751.7 1182.8,750.2 1187.7,751.7 1192.6,751.7 1197.5,751.7 1202.4,751.7 1207.3,751.7 1212.2,751.7 1217.1,751.7 1222.0,751.7 1226.9,751.7 1231.8,751.7 1236.7,751.7 1241.6,751.7 1246.5,751.7 1251.4,750.0 1256.3,751.7 1261.2,751.7 1266.1,751.7 1271.0,751.7 1275.9,751.7 1280.8,751.7 1285.7,751.7 1290.6,751.7 1295.5,751.7 1300.4,751.7 1305.3,751.7 1310.2,751.7 1315.1,751.7 1320.0,750.4 1324.9,751.7 1329.8,751.7 1334.7,751.7 1339.6,751.7 1344.5,751.7 1349.4,751.7 1354.3,751.7 1359.2,751.7 1364.1,751.7 1369.0,751.7 1373.9,751.7 1378.8,751.7 1383.7,750.2 1388.6,751.7 1393.5,751.7 1398.4,751.7 1403.3,751.7 1408.2,751.7 1413.1,751.7 1418.0,750.4 1422.9,751.7 1427.8,751.7 1432.7,751.7 1437.6,751.7 1442.5,751.7 1447.4,751.7 1452.3,749.8 1457.2,751.7 1462.1,751.7 1467.0,751.7 1471.9,751.7 1476.8,751.7 1481.7,751.7 1486.6,750.0 1491.5,751.7 1496.4,751.7 1501.3,751.7 1506.2,751.7 1511.1,751.7 1516.0,751.7 1520.9,749.4 1525.8,751.7 1530.7,751.7 1535.6,751.7 1540.5,751.7 1545.4,751.7 1550.3,751.7 1555.2,750.0 1560.1,751.7 1565.0,751.7 1569.9,751.7 1574.8,751.7 1579.7,750.2 1584.6,751.7 1589.5,751.7 1594.4,751.7 1599.3,751.7 1604.2,751.7 1609.1,751.7 1614.0,750.2 1618.9,751.7 1623.8,751.7 1628.7,751.7 1633.6,751.7 1638.5,751.7 1643.4,751.7 1648.3,751.7 1653.2,750.0 1658.1,751.7 1663.0,751.7 1667.9,751.7 1672.8,751.7 1677.7,751.7 1682.6,751.7 1687.5,750.2 1692.4,751.7 1697.3,751.7 1702.2,751.7 1707.1,751.7 1712.0,750.0 1716.9,751.7 1721.8,751.7 1726.7,751.7 1731.6,751.7 1736.5,749.2 1741.4,751.7 1746.3,751.7 1751.2,751.7 1756.1,751.7 1761.0,749.8 1765.9,751.7 1770.8,751.7 1775.7,751.7 1780.6,751.7 1785.5,751.7 1790.4,751.7 1795.3,751.7 1800.2,751.7 1805.1,749.4 1810.0,751.7 1814.9,751.7 1819.8,751.7 1824.7,751.7 1829.6,751.7 1834.5,751.7 1839.4,751.7 1844.3,751.7 1849.2,751.7 1854.1,751.7 1859.0,750.2 1863.9,751.7 1868.8,751.7 1873.7,751.7 1878.6,751.7 1883.5,751.7 1888.4,751.7 1893.3,750.2 1898.2,751.7 1903.1,751.7 1908.0,751.7 1912.9,751.7 1917.8,751.7 1922.7,751.7 1927.6,749.8 1932.5,751.7 1937.4,751.7 1942.3,751.7 1947.2,751.7 1952.1,751.7 1957.0,751.7 1961.9,750.0 1966.8,751.7 1971.7,751.7 1976.6,751.7 1981.5,751.7 1986.4,751.7 1990.6,752.4" fill="#c9cd45"/>
<rect x="1514" y="577" width="2" height="175.5" fill="#000"/>
<rect x="124.2" y="466.0" width="20" height="20" fill="#3a9fd1"/>
<rect x="200.2" y="466.0" width="20" height="20" fill="#e5191c"/>
<rect x="1247.3" y="463.8" width="65.5" height="24.4" fill="#fdeef8"/>
<rect x="1097.0" y="466.0" width="20" height="20" fill="#3a9fd1"/>
<rect x="1173.0" y="466.0" width="20" height="20" fill="#9b87c4"/>
<rect x="1248.9" y="466.0" width="20" height="20" fill="#ff0aa0"/>
<rect x="1325.5" y="466.5" width="19" height="19" fill="#fff" stroke="#ccc"/>
<rect x="1401.5" y="466.5" width="19" height="19" fill="#fff" stroke="#ccc"/>
<rect x="124.0" y="793.0" width="20" height="20" fill="#fdb652"/>
<rect x="199.9" y="793.0" width="20" height="20" fill="#f04a1e"/>
<rect x="1121.7" y="793.0" width="20" height="20" fill="#a0528f"/>
<rect x="1215.0" y="793.0" width="20" height="20" fill="#c55dc4"/>
<rect x="1328.0" y="793.0" width="20" height="20" fill="#d43e7a"/>
<rect x="1442.8" y="793.0" width="20" height="20" fill="#43cdd1"/>
<rect x="1620.6" y="793.0" width="20" height="20" fill="#4e8667"/>
<rect x="1794.8" y="793.0" width="20" height="20" fill="#5ba022"/>
<defs><linearGradient id="fade" x1="0" x2="1" y1="0" y2="0"><stop offset="0" stop-color="#6aae3c"/><stop offset="1" stop-color="#9bc77c"/></linearGradient></defs>
<rect x="1923" y="793" width="20" height="20" fill="url(#fade)"/>
<polyline points="1108.6,798.8 1104.4,803 1108.6,807.2" fill="none" stroke="#c4c4c4" stroke-width="1.7"/>
<polyline points="1993.2,798.8 1997.4,803 1993.2,807.2" fill="none" stroke="#777" stroke-width="1.7"/>
<rect x="151.0" y="930.00" width="1857.0" height="1" fill="#e9e9e9"/>
<rect x="300.2" y="930" width="16.6" height="20" fill="#4fa9d6"/>
<line x1="530.4" y1="922.8" x2="530.4" y2="950" stroke="#c8c8c8" stroke-width="1.2" stroke-dasharray="6 6.3"/>
<line x1="675.7" y1="922.8" x2="675.7" y2="950" stroke="#c8c8c8" stroke-width="1.2" stroke-dasharray="6 6.3"/>
<line x1="1007.2" y1="922.8" x2="1007.2" y2="950" stroke="#c8c8c8" stroke-width="1.2" stroke-dasharray="6 6.3"/>
<line x1="1982.7" y1="922.8" x2="1982.7" y2="950" stroke="#c8c8c8" stroke-width="1.2" stroke-dasharray="6 6.3"/>
<polyline points="145.2,12.6 150.0,17.2 145.2,21.8" fill="none" stroke="#aaa" stroke-width="1.3"/>
<polygon points="93.0,40.5 95.9,46.1 102.1,47.1 97.7,51.6 98.6,57.9 93.0,55.0 87.4,57.9 88.3,51.6 83.9,47.1 90.1,46.1" fill="none" stroke="#bdbdbd" stroke-width="2" stroke-linejoin="miter"/>
<g fill="none" stroke="#777" stroke-width="1.3"><circle cx="127.8" cy="49.7" r="7.6"/><ellipse cx="127.8" cy="49.7" rx="3.4" ry="7.6"/><line x1="127.8" y1="42.1" x2="127.8" y2="57.3"/><line x1="120.2" y1="49.7" x2="135.4" y2="49.7"/><path d="M121.6 45.6H134M121.6 53.8H134" stroke-width="1.1"/></g>
<path d="M1931.6 45.2v12.4l-6.8-6.2zM1939 45.2v12.4l-6.8-6.2z" fill="#3a9fd1"/>
<rect x="1963" y="44.8" width="5.9" height="13.4" fill="#fff"/><rect x="1972.4" y="44.8" width="5.9" height="13.4" fill="#fff"/>
<path d="M2001.2 45.8v11.6l6.6-5.8zM2008.4 45.8v11.6l6.6-5.8z" fill="#bdbdbd"/>
<g transform="translate(21,201.5)"><rect x="0.75" y="0.75" width="19" height="14.6" rx="1.5" fill="none" stroke="#b3adba" stroke-width="1.5"/><rect x="0.75" y="0.75" width="19" height="3" fill="#b3adba"/><path d="M3.5 6.4h1.6v1.4H3.5zM6.6 6.4h10.6v1.4H6.6zM3.5 9.1h1.6v1.4H3.5zM6.6 9.1h10.6v1.4H6.6zM3.5 11.8h1.6v1.4H3.5zM6.6 11.8h10.6v1.4H6.6z" fill="#b3adba"/></g>
<g transform="translate(21,249.5)"><path d="M0.8 0v16.6H23" fill="none" stroke="#b3adba" stroke-width="1.6"/><path d="M3.2 14.6V8.2L7.6 2.6L11.4 7.4L15 4.8L18.6 8.8L20.8 14.6Z" fill="#b3adba"/></g>
<polygon points="50.0,255.3 50.0,263.7 54.9,259.5" fill="#6d6578"/>
<polygon points="25.8,298.7 29.9,301.0 29.9,305.8 25.8,308.1 21.7,305.8 21.7,301.0" fill="#b3adba"/>
<polygon points="36.9,299.2 40.5,301.3 40.5,305.5 36.9,307.6 33.3,305.5 33.3,301.3" fill="none" stroke="#b3adba" stroke-width="1.2"/>
<polygon points="31.3,308.0 35.4,310.3 35.4,315.1 31.3,317.4 27.2,315.1 27.2,310.3" fill="#b3adba"/>
<polygon points="50.0,304.3 50.0,312.7 54.9,308.5" fill="#6d6578"/>
<circle cx="31.4" cy="355.8" r="8.6" fill="#b3adba"/><rect x="30.1" y="350.2" width="2.6" height="7.2" rx="0.6" fill="#3a3345"/><circle cx="31.4" cy="360.3" r="1.5" fill="#3a3345"/>
<polygon points="50.0,353.3 50.0,361.7 54.9,357.5" fill="#6d6578"/>
<circle cx="23.5" cy="412.4" r="1.05" fill="#b3adba"/>
<circle cx="22.2" cy="409.5" r="1.05" fill="#b3adba"/>
<circle cx="21.9" cy="406.3" r="1.05" fill="#b3adba"/>
<circle cx="23.2" cy="402.9" r="1.05" fill="#b3adba"/>
<circle cx="26.2" cy="400.1" r="1.05" fill="#b3adba"/>
<circle cx="30.3" cy="398.5" r="1.05" fill="#b3adba"/>
<path d="M38.2 401.8A8.8 8.8 0 0 1 38.4 412.3" fill="none" stroke="#b3adba" stroke-width="3" stroke-linecap="round"/>
<path d="M29.1 406.7L36.0 397.6L36.9 398.2L33.0 408.9Z" fill="#b3adba"/><circle cx="31.0" cy="407.9" r="2.3" fill="#b3adba"/>
<polygon points="50.0,401.6 50.0,410.0 54.9,405.8" fill="#6d6578"/>
<path d="M22.2 449.6h5.2a2.6 2.6 0 1 1 4.4 0h5v4.4a2.5 2.5 0 1 1 0 4.6v4.2h-5.2a2.3 2.3 0 1 0-4.2 0h-5.2z" fill="#b3adba"/>
<polygon points="50.0,450.8 50.0,459.2 54.9,455" fill="#6d6578"/>
<path d="M21 494.5h20.6v3.2H21zM21 498.6h4v1.6h-4zM27.4 500.3h14.2v3H27.4zM27.4 504.2h3.4v1.4h-3.4zM32 505.9h9.6v2.6H32zM32 509.2h3.6v2.4H32z" fill="#fff"/>
<polygon points="50.0,499.8 50.0,508.2 54.9,504" fill="#6d6578"/>
<path d="M26.2 543.2h12.6a1 1 0 0 1 1 1.3l-3.2 13.2a1.6 1.6 0 0 1-1.5 1.2H23.6a1.8 1.8 0 0 1-1.7-2.3l2.9-12.2a1.6 1.6 0 0 1 1.4-1.2z" fill="#b3adba"/><path d="M28 547h8.4M27.4 549.8h8.4" stroke="#352c40" stroke-width="1.3"/><path d="M23 556.4h12.4" stroke="#352c40" stroke-width="1"/>
<polygon points="50.0,548.8 50.0,557.2 54.9,553" fill="#6d6578"/>
<circle cx="31.3" cy="890.9" r="8.5" fill="#a9a3ae"/>
<g fill="#a9a3ae"><ellipse cx="39.2" cy="937.6" rx="3.4" ry="4.3"/><path d="M37.6 940.6V943.4C36.8 944 36 944.4 35.2 944.9C37 946.3 37.7 948 37.8 950.5H46C46 946.2 43.6 944.8 40.8 943.5V940.6Z"/><ellipse cx="28.7" cy="935.0" rx="4.1" ry="5.0"/><path d="M26.6 939V942.6C24 943.9 21 945.4 21 950.5H36.4C36.4 945.4 33.4 943.9 30.8 942.6V939Z"/></g>
<g transform="scale(0.05893)"><path d="M215 110C240 60 300 30 345 55C375 90 380 170 365 230C345 265 300 250 255 215C225 190 200 150 215 110Z" fill="#ececef"/><path d="M385 110C430 70 520 60 585 55L640 5L685 25L745 110L738 135L695 105C700 170 720 250 750 320C755 385 700 425 655 442C600 465 540 455 495 430L490 480L480 620C470 690 440 760 420 790C370 810 310 770 262 700C235 650 262 620 300 600C345 575 370 520 372 450C330 400 290 330 295 260C330 265 365 240 375 200C385 170 388 140 385 110Z" fill="#ececef"/><path d="M485 470L880 405L902 665L530 745Z" fill="#ececef"/><path d="M515 500L855 440L870 640L550 708Z" fill="#4a4553"/><path d="M515 500L855 440L858 470L800 555L745 520L690 600L640 585L590 620L560 660L548 700Z" fill="#ececef"/><ellipse cx="488" cy="238" rx="34" ry="28" transform="rotate(-25 488 238)" fill="#4a4553"/><ellipse cx="662" cy="205" rx="18" ry="26" transform="rotate(-15 662 205)" fill="#4a4553"/><path d="M632 335C650 318 700 315 715 328C705 355 680 372 665 368C650 362 636 350 632 335Z" fill="#4a4553"/><path d="M495 428C540 460 600 468 655 445" fill="none" stroke="#4a4553" stroke-width="14"/><path d="M372 585C420 590 455 640 465 690" fill="none" stroke="#4a4553" stroke-width="12"/></g>
</svg>
<span class="t" style="left:82.40px;top:10.35px;font-size:14px;line-height:14px;color:#4a9ac6;letter-spacing:-0.069px;">Services</span>
<span class="t" style="left:158.90px;top:10.35px;font-size:14px;line-height:14px;color:#4a9ac6;letter-spacing:0.449px;">env:staging</span>
<span class="t" style="left:148.90px;top:37.94px;font-size:25px;line-height:25px;color:#2b2b34;font-weight:700;letter-spacing:0.010px;">mcnulty-web</span>
<span class="t" style="left:332.80px;top:43.86px;font-size:16px;line-height:16px;color:#2b2b34;font-weight:700;letter-spacing:1.008px;">13.5 req/s</span>
<span class="t" style="left:436.20px;top:43.86px;font-size:16px;line-height:16px;color:#2b2b34;font-weight:700;letter-spacing:0.735px;">34.9 ms (avg)</span>
<span class="t" style="left:566.20px;top:43.86px;font-size:16px;line-height:16px;color:#2b2b34;font-weight:700;letter-spacing:0.392px;">&lt; 0.1 % errors</span>
<span class="t" style="left:1536.80px;top:43.01px;font-size:17px;line-height:17px;color:#2b2b34;letter-spacing:-0.509px;">1h</span>
<span class="t" style="left:1566.70px;top:43.01px;font-size:17px;line-height:17px;color:#2b2b34;letter-spacing:-0.017px;">The Past Hour</span>
<span class="t" style="left:547.70px;top:126.68px;font-size:15.5px;line-height:15.5px;color:#fff;font-weight:700;letter-spacing:-0.169px;">1 ALERT</span>
<span class="t" style="left:1513.00px;top:126.68px;font-size:15.5px;line-height:15.5px;color:#fff;font-weight:700;letter-spacing:0.474px;">1 OK</span>
<span class="t" style="left:124.10px;top:200.26px;font-size:18px;line-height:18px;color:#2b2b34;font-weight:700;letter-spacing:0.326px;">Hits per second</span>
<span class="t" style="left:311.80px;top:201.96px;font-size:16px;line-height:16px;color:#aaa;font-weight:700;letter-spacing:0.621px;">14 hits/s</span>
<span class="t" style="left:1082.40px;top:199.86px;font-size:18px;line-height:18px;color:#2b2b34;font-weight:700;letter-spacing:-0.121px;">Latency</span>
<span class="t" style="left:1161.00px;top:201.56px;font-size:16px;line-height:16px;color:#aaa;font-weight:700;letter-spacing:0.187px;">34.9 ms avg</span>
<span class="t" style="left:123.20px;top:526.16px;font-size:18px;line-height:18px;color:#2b2b34;font-weight:700;letter-spacing:0.060px;">% Error Rate</span>
<span class="t" style="left:280.30px;top:527.86px;font-size:16px;line-height:16px;color:#aaa;font-weight:700;letter-spacing:0.337px;">9 total (&lt; 0.1 % )</span>
<span class="t" style="left:1096.30px;top:526.16px;font-size:18px;line-height:18px;color:#2b2b34;font-weight:700;letter-spacing:0.728px;">Total time spent</span>
<span class="t" style="left:1300.60px;top:526.16px;font-size:18px;line-height:18px;color:#2b2b34;font-weight:700;letter-spacing:-0.506px;">by</span>
<span class="t" style="left:1356.70px;top:526.16px;font-size:18px;line-height:18px;color:#2b2b34;font-weight:700;letter-spacing:0.107px;">service</span>
<span class="t" style="left:109.50px;top:851.61px;font-size:17px;line-height:17px;color:#2b2b34;font-weight:700;letter-spacing:0.919px;">Latency Distribution</span>
<span class="t" style="left:127.67px;top:267.28px;font-size:13.2px;line-height:13.2px;color:#555;letter-spacing:0.150px;">20</span>
<span class="t" style="left:127.67px;top:305.13px;font-size:13.2px;line-height:13.2px;color:#555;letter-spacing:0.150px;">15</span>
<span class="t" style="left:127.67px;top:343.03px;font-size:13.2px;line-height:13.2px;color:#555;letter-spacing:0.150px;">10</span>
<span class="t" style="left:135.16px;top:380.88px;font-size:13.2px;line-height:13.2px;color:#555;letter-spacing:0.150px;">5</span>
<span class="t" style="left:135.16px;top:418.73px;font-size:13.2px;line-height:13.2px;color:#555;letter-spacing:0.150px;">0</span>
<span class="t" style="left:153.98px;top:433.83px;font-size:13.2px;line-height:13.2px;color:#555;letter-spacing:0.150px;">12:40</span>
<span class="t" style="left:227.50px;top:433.83px;font-size:13.2px;line-height:13.2px;color:#555;letter-spacing:0.150px;">12:45</span>
<span class="t" style="left:301.02px;top:433.83px;font-size:13.2px;line-height:13.2px;color:#555;letter-spacing:0.150px;">12:50</span>
<span class="t" style="left:374.54px;top:433.83px;font-size:13.2px;line-height:13.2px;color:#555;letter-spacing:0.150px;">12:55</span>
<span class="t" style="left:448.06px;top:433.83px;font-size:13.2px;line-height:13.2px;color:#555;letter-spacing:0.150px;">13:00</span>
<span class="t" style="left:521.58px;top:433.83px;font-size:13.2px;line-height:13.2px;color:#555;letter-spacing:0.150px;">13:05</span>
<span class="t" style="left:595.10px;top:433.83px;font-size:13.2px;line-height:13.2px;color:#555;letter-spacing:0.150px;">13:10</span>
<span class="t" style="left:668.62px;top:433.83px;font-size:13.2px;line-height:13.2px;color:#555;letter-spacing:0.150px;">13:15</span>
<span class="t" style="left:742.14px;top:433.83px;font-size:13.2px;line-height:13.2px;color:#555;letter-spacing:0.150px;">13:20</span>
<span class="t" style="left:815.66px;top:433.83px;font-size:13.2px;line-height:13.2px;color:#555;letter-spacing:0.150px;">13:25</span>
<span class="t" style="left:889.18px;top:433.83px;font-size:13.2px;line-height:13.2px;color:#555;letter-spacing:0.150px;">13:30</span>
<span class="t" style="left:962.70px;top:433.83px;font-size:13.2px;line-height:13.2px;color:#555;letter-spacing:0.150px;">13:35</span>
<span class="t" style="left:1092.18px;top:244.23px;font-size:13.2px;line-height:13.2px;color:#555;letter-spacing:0.150px;">400</span>
<span class="t" style="left:1092.18px;top:287.83px;font-size:13.2px;line-height:13.2px;color:#555;letter-spacing:0.150px;">300</span>
<span class="t" style="left:1092.18px;top:331.43px;font-size:13.2px;line-height:13.2px;color:#555;letter-spacing:0.150px;">200</span>
<span class="t" style="left:1092.18px;top:375.03px;font-size:13.2px;line-height:13.2px;color:#555;letter-spacing:0.150px;">100</span>
<span class="t" style="left:1107.16px;top:418.53px;font-size:13.2px;line-height:13.2px;color:#555;letter-spacing:0.150px;">0</span>
<span class="t" style="left:1126.18px;top:434.13px;font-size:13.2px;line-height:13.2px;color:#555;letter-spacing:0.150px;">12:40</span>
<span class="t" style="left:1199.77px;top:434.13px;font-size:13.2px;line-height:13.2px;color:#555;letter-spacing:0.150px;">12:45</span>
<span class="t" style="left:1273.36px;top:434.13px;font-size:13.2px;line-height:13.2px;color:#555;letter-spacing:0.150px;">12:50</span>
<span class="t" style="left:1346.95px;top:434.13px;font-size:13.2px;line-height:13.2px;color:#555;letter-spacing:0.150px;">12:55</span>
<span class="t" style="left:1420.54px;top:434.13px;font-size:13.2px;line-height:13.2px;color:#555;letter-spacing:0.150px;">13:00</span>
<span class="t" style="left:1494.13px;top:434.13px;font-size:13.2px;line-height:13.2px;color:#555;letter-spacing:0.150px;">13:05</span>
<span class="t" style="left:1567.72px;top:434.13px;font-size:13.2px;line-height:13.2px;color:#555;letter-spacing:0.150px;">13:10</span>
<span class="t" style="left:1641.31px;top:434.13px;font-size:13.2px;line-height:13.2px;color:#555;letter-spacing:0.150px;">13:15</span>
<span class="t" style="left:1714.90px;top:434.13px;font-size:13.2px;line-height:13.2px;color:#555;letter-spacing:0.150px;">13:20</span>
<span class="t" style="left:1788.49px;top:434.13px;font-size:13.2px;line-height:13.2px;color:#555;letter-spacing:0.150px;">13:25</span>
<span class="t" style="left:1862.08px;top:434.13px;font-size:13.2px;line-height:13.2px;color:#555;letter-spacing:0.150px;">13:30</span>
<span class="t" style="left:1935.67px;top:434.13px;font-size:13.2px;line-height:13.2px;color:#555;letter-spacing:0.150px;">13:35</span>
<span class="t" style="left:1532.00px;top:324.10px;font-size:13px;line-height:13px;color:#111;letter-spacing:0.253px;font-family:'DejaVu Sans', 'Liberation Sans', sans-serif;">90p</span>
<span class="t" style="left:1532.00px;top:344.32px;font-size:12.5px;line-height:12.5px;color:#fff;font-weight:700;letter-spacing:0.064px;font-family:'DejaVu Sans', 'Liberation Sans', sans-serif;">46.14 ms</span>
<span class="t" style="left:1481.70px;top:436.24px;font-size:12px;line-height:12px;color:#fff;font-weight:700;font-family:'DejaVu Sans', 'Liberation Sans', sans-serif;">13:05:00</span>
<span class="t" style="left:135.16px;top:570.63px;font-size:13.2px;line-height:13.2px;color:#555;letter-spacing:0.150px;">2</span>
<span class="t" style="left:123.85px;top:614.33px;font-size:13.2px;line-height:13.2px;color:#555;letter-spacing:0.150px;">1.5</span>
<span class="t" style="left:135.16px;top:658.13px;font-size:13.2px;line-height:13.2px;color:#555;letter-spacing:0.150px;">1</span>
<span class="t" style="left:123.85px;top:701.83px;font-size:13.2px;line-height:13.2px;color:#555;letter-spacing:0.150px;">0.5</span>
<span class="t" style="left:135.16px;top:745.63px;font-size:13.2px;line-height:13.2px;color:#555;letter-spacing:0.150px;">0</span>
<span class="t" style="left:153.98px;top:760.73px;font-size:13.2px;line-height:13.2px;color:#555;letter-spacing:0.150px;">12:40</span>
<span class="t" style="left:227.50px;top:760.73px;font-size:13.2px;line-height:13.2px;color:#555;letter-spacing:0.150px;">12:45</span>
<span class="t" style="left:301.02px;top:760.73px;font-size:13.2px;line-height:13.2px;color:#555;letter-spacing:0.150px;">12:50</span>
<span class="t" style="left:374.54px;top:760.73px;font-size:13.2px;line-height:13.2px;color:#555;letter-spacing:0.150px;">12:55</span>
<span class="t" style="left:448.06px;top:760.73px;font-size:13.2px;line-height:13.2px;color:#555;letter-spacing:0.150px;">13:00</span>
<span class="t" style="left:521.58px;top:760.73px;font-size:13.2px;line-height:13.2px;color:#555;letter-spacing:0.150px;">13:05</span>
<span class="t" style="left:595.10px;top:760.73px;font-size:13.2px;line-height:13.2px;color:#555;letter-spacing:0.150px;">13:10</span>
<span class="t" style="left:668.62px;top:760.73px;font-size:13.2px;line-height:13.2px;color:#555;letter-spacing:0.150px;">13:15</span>
<span class="t" style="left:742.14px;top:760.73px;font-size:13.2px;line-height:13.2px;color:#555;letter-spacing:0.150px;">13:20</span>
<span class="t" style="left:815.66px;top:760.73px;font-size:13.2px;line-height:13.2px;color:#555;letter-spacing:0.150px;">13:25</span>
<span class="t" style="left:889.18px;top:760.73px;font-size:13.2px;line-height:13.2px;color:#555;letter-spacing:0.150px;">13:30</span>
<span class="t" style="left:962.70px;top:760.73px;font-size:13.2px;line-height:13.2px;color:#555;letter-spacing:0.150px;">13:35</span>
<span class="t" style="left:1099.67px;top:569.83px;font-size:13.2px;line-height:13.2px;color:#555;letter-spacing:0.150px;">50</span>
<span class="t" style="left:1099.67px;top:604.83px;font-size:13.2px;line-height:13.2px;color:#555;letter-spacing:0.150px;">40</span>
<span class="t" style="left:1099.67px;top:639.83px;font-size:13.2px;line-height:13.2px;color:#555;letter-spacing:0.150px;">30</span>
<span class="t" style="left:1099.67px;top:674.83px;font-size:13.2px;line-height:13.2px;color:#555;letter-spacing:0.150px;">20</span>
<span class="t" style="left:1099.67px;top:709.83px;font-size:13.2px;line-height:13.2px;color:#555;letter-spacing:0.150px;">10</span>
<span class="t" style="left:1107.16px;top:744.83px;font-size:13.2px;line-height:13.2px;color:#555;letter-spacing:0.150px;">0</span>
<span class="t" style="left:1126.18px;top:760.73px;font-size:13.2px;line-height:13.2px;color:#555;letter-spacing:0.150px;">12:40</span>
<span class="t" style="left:1199.77px;top:760.73px;font-size:13.2px;line-height:13.2px;color:#555;letter-spacing:0.150px;">12:45</span>
<span class="t" style="left:1273.36px;top:760.73px;font-size:13.2px;line-height:13.2px;color:#555;letter-spacing:0.150px;">12:50</span>
<span class="t" style="left:1346.95px;top:760.73px;font-size:13.2px;line-height:13.2px;color:#555;letter-spacing:0.150px;">12:55</span>
<span class="t" style="left:1420.54px;top:760.73px;font-size:13.2px;line-height:13.2px;color:#555;letter-spacing:0.150px;">13:00</span>
<span class="t" style="left:1494.13px;top:760.73px;font-size:13.2px;line-height:13.2px;color:#555;letter-spacing:0.150px;">13:05</span>
<span class="t" style="left:1567.72px;top:760.73px;font-size:13.2px;line-height:13.2px;color:#555;letter-spacing:0.150px;">13:10</span>
<span class="t" style="left:1641.31px;top:760.73px;font-size:13.2px;line-height:13.2px;color:#555;letter-spacing:0.150px;">13:15</span>
<span class="t" style="left:1714.90px;top:760.73px;font-size:13.2px;line-height:13.2px;color:#555;letter-spacing:0.150px;">13:20</span>
<span class="t" style="left:1788.49px;top:760.73px;font-size:13.2px;line-height:13.2px;color:#555;letter-spacing:0.150px;">13:25</span>
<span class="t" style="left:1862.08px;top:760.73px;font-size:13.2px;line-height:13.2px;color:#555;letter-spacing:0.150px;">13:30</span>
<span class="t" style="left:1935.67px;top:760.73px;font-size:13.2px;line-height:13.2px;color:#555;letter-spacing:0.150px;">13:35</span>
<span class="t" style="left:154.30px;top:468.00px;font-size:13px;line-height:13px;color:#333;">Hits</span>
<span class="t" style="left:230.60px;top:468.00px;font-size:13px;line-height:13px;color:#333;">Errors</span>
<span class="t" style="left:1127.60px;top:468.00px;font-size:13px;line-height:13px;color:#333;letter-spacing:0.405px;">50p</span>
<span class="t" style="left:1203.70px;top:468.00px;font-size:13px;line-height:13px;color:#333;letter-spacing:0.405px;">75p</span>
<span class="t" style="left:1279.50px;top:468.00px;font-size:13px;line-height:13px;color:#333;letter-spacing:0.605px;">90p</span>
<span class="t" style="left:1355.80px;top:468.00px;font-size:13px;line-height:13px;color:#333;letter-spacing:0.405px;">99p</span>
<span class="t" style="left:1432.00px;top:468.00px;font-size:13px;line-height:13px;color:#333;letter-spacing:0.120px;">max</span>
<span class="t" style="left:154.60px;top:795.00px;font-size:13px;line-height:13px;color:#333;letter-spacing:0.255px;">500</span>
<span class="t" style="left:230.70px;top:795.00px;font-size:13px;line-height:13px;color:#333;">Errors</span>
<span class="t" style="left:1152.00px;top:795.00px;font-size:13px;line-height:13px;color:#333;letter-spacing:0.150px;">beaker</span>
<span class="t" style="left:1245.30px;top:795.00px;font-size:13px;line-height:13px;color:#333;letter-spacing:0.028px;">cassandra</span>
<span class="t" style="left:1358.30px;top:795.00px;font-size:13px;line-height:13px;color:#333;letter-spacing:0.594px;">dogpound</span>
<span class="t" style="left:1473.20px;top:795.00px;font-size:13px;line-height:13px;color:#333;letter-spacing:0.452px;">elasticsearch-mon...</span>
<span class="t" style="left:1650.50px;top:795.00px;font-size:13px;line-height:13px;color:#333;letter-spacing:0.300px;">elasticsearch-traces</span>
<span class="t" style="left:1825.10px;top:795.00px;font-size:13px;line-height:13px;color:#333;letter-spacing:0.625px;">host-pshard</span>
<span class="t" style="left:1952.80px;top:795.00px;font-size:13px;line-height:13px;color:#333;-webkit-mask-image:linear-gradient(90deg,rgba(0,0,0,.35),rgba(0,0,0,0) 95%);mask-image:linear-gradient(90deg,rgba(0,0,0,.35),rgba(0,0,0,0) 95%);">host-</span>
<span class="t" style="left:518.96px;top:907.64px;font-size:12px;line-height:12px;color:#222;font-family:'DejaVu Sans', 'Liberation Sans', sans-serif;">p50</span>
<span class="t" style="left:664.26px;top:907.64px;font-size:12px;line-height:12px;color:#222;font-family:'DejaVu Sans', 'Liberation Sans', sans-serif;">p75</span>
<span class="t" style="left:995.76px;top:907.64px;font-size:12px;line-height:12px;color:#222;font-family:'DejaVu Sans', 'Liberation Sans', sans-serif;">p90</span>
<span class="t" style="left:1971.26px;top:907.64px;font-size:12px;line-height:12px;color:#222;font-family:'DejaVu Sans', 'Liberation Sans', sans-serif;">p95</span>
<span class="t" style="left:107.10px;top:924.04px;font-size:12px;line-height:12px;color:#222;letter-spacing:0.133px;font-family:'DejaVu Sans', 'Liberation Sans', sans-serif;">6.00k</span>
<span class="t" style="left:107.10px;top:948.44px;font-size:12px;line-height:12px;color:#222;letter-spacing:0.133px;font-family:'DejaVu Sans', 'Liberation Sans', sans-serif;">5.00k</span>
<span class="t" style="left:1809.60px;top:858.30px;font-size:15px;line-height:15px;color:#333;letter-spacing:0.936px;">p90</span>
<span class="t" style="left:1862.80px;top:858.30px;font-size:15px;line-height:15px;color:#fff;font-weight:700;letter-spacing:0.426px;">p95</span>
<span class="t" style="left:1916.50px;top:858.30px;font-size:15px;line-height:15px;color:#333;letter-spacing:0.986px;">p99</span>
<span class="t" style="left:1970.00px;top:858.30px;font-size:15px;line-height:15px;color:#333;letter-spacing:0.465px;">All</span>
<span class="t" style="left:27.02px;top:884.35px;font-size:14px;line-height:14px;color:#21122a;font-weight:700;">?</span>
</body></html>
